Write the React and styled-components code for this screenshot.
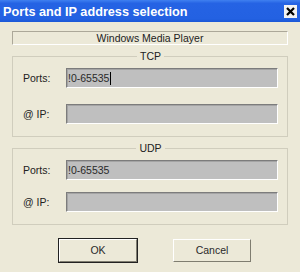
import React from "react"
import styled, { createGlobalStyle } from "styled-components"

const GlobalStyle = createGlobalStyle`
    html, body {
        margin: 0;
        padding: 0;
        background: #ece9d8;
    }
    body {
        font-family: "Liberation Sans", Arial, sans-serif;
        font-size: 10.5px;
        color: #222;
    }
`

const Window = styled.div`
    width: 300px;
    height: 272px;
    background: #ece9d8;
    display: flex;
    flex-direction: column;
    overflow: hidden;
`

const TitleBar = styled.div`
    height: 22px;
    flex-shrink: 0;
    display: flex;
    align-items: center;
    justify-content: space-between;
    padding: 0 3px 0 3px;
    background: linear-gradient(#3f80f0 0%, #2563e4 15%, #2361e2 85%, #1c58d6 100%);
`

const Title = styled.div`
    color: #fff;
    font-weight: bold;
    font-size: 12.7px;
    padding-top: 1px;
    white-space: nowrap;
`

const CloseButton = styled.div`
    width: 13px;
    height: 13px;
    margin-top: 1px;
    background: #f2f2f2;
    display: flex;
    align-items: center;
    justify-content: center;
`

const Body = styled.div`
    flex: 1;
    padding: 9px 12px 0 12px;
    display: flex;
    flex-direction: column;
`

const InfoBox = styled.div`
    height: 12px;
    line-height: 12px;
    text-align: center;
    border: 1px solid #fff;
    border-top-color: #aca899;
    border-left-color: #aca899;
`

const Group = styled.fieldset`
    margin: ${p => p.$top}px 0 0 0;
    padding: 6px 9px 12px 10px;
    border: 1px solid #d0cdbd;
    min-inline-size: 0;
    display: flex;
    flex-direction: column;
    gap: ${p => p.$gap}px;
`

const Caption = styled.legend`
    margin: 0 auto;
    padding: 0 3px;
    line-height: 12px;
    height: 12px;
`

const Row = styled.div`
    display: grid;
    grid-template-columns: 43px 1fr;
    align-items: center;
`

const Label = styled.span`
    white-space: nowrap;
`

const Field = styled.div`
    height: 18px;
    line-height: 18px;
    padding-left: 1px;
    background: #bfbfbf;
    border: 1px solid #fff;
    border-top-color: #7c7c7c;
    border-left-color: #7c7c7c;
    box-shadow: inset 1px 1px 0 #a4a4a4;
    color: #2a2a2a;
    white-space: nowrap;
    display: flex;
    align-items: center;
`

const Caret = styled.span`
    display: inline-block;
    width: 1px;
    height: 13px;
    background: #000;
    margin-left: 1px;
`

const ButtonRow = styled.div`
    margin-top: 14px;
    padding-left: 47px;
    display: flex;
    gap: 36px;
`

const Button = styled.div`
    width: 76px;
    height: 21px;
    line-height: 21px;
    text-align: center;
    background: #ece9d8;
    border: 1px solid #7f7d70;
    border-top-color: #fff;
    border-left-color: #fff;
    outline: ${p => (p.$default ? "1px solid #222" : "none")};
    color: #2a2a2a;
`

const Section = ({ name, top, gap, caret }) => (
    <Group $top={top} $gap={gap}>
        <Caption>{name}</Caption>
        <Row>
            <Label>Ports:</Label>
            <Field>
                !0-65535
                {caret && <Caret />}
            </Field>
        </Row>
        <Row>
            <Label>@ IP:</Label>
            <Field />
        </Row>
    </Group>
)

export default function App() {
    return (
        <Window>
            <GlobalStyle />
            <TitleBar>
                <Title>Ports and IP address selection</Title>
                <CloseButton>
                    <svg width="9" height="9" viewBox="0 0 9 9">
                        <path d="M1 1 L8 8 M8 1 L1 8" stroke="#000" strokeWidth="2.2" />
                    </svg>
                </CloseButton>
            </TitleBar>
            <Body>
                <InfoBox>Windows Media Player</InfoBox>
                <Section name="TCP" top={5} gap={16} caret />
                <Section name="UDP" top={5} gap={12} />
                <ButtonRow>
                    <Button $default>OK</Button>
                    <Button>Cancel</Button>
                </ButtonRow>
            </Body>
        </Window>
    )
}
